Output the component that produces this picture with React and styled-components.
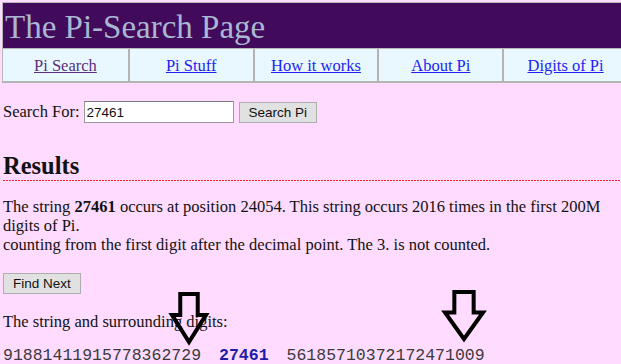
import React from "react";
import styled, { createGlobalStyle } from "styled-components";

const Global = createGlobalStyle`
  html, body { margin: 0; padding: 0; }
  body {
    background: #ffdcff;
    font-family: "Liberation Serif", "Times New Roman", serif;
    font-size: 16.5px;
    color: #111;
    overflow: hidden;
  }
`;

const Page = styled.div`
  position: relative;
  width: 621px;
  height: 364px;
  overflow: hidden;
  background: #ffdcff;
`;

const Header = styled.header`
  margin: 2px 0 0 2px;
  width: 624px;
  border-top: 1px solid #b8b8b8;
  border-left: 1px solid #b8b8b8;
`;

const TitleBar = styled.div`
  height: 45px;
  background: #420a5b;
  display: flex;
  align-items: center;
  padding-left: 2px;
`;

const Title = styled.h1`
  margin: 0;
  font-family: "Liberation Serif", "Times New Roman", serif;
  font-weight: normal;
  font-size: 33px;
  line-height: 36px;
  color: #a9b8d2;
  position: relative;
  top: 1px;
`;

const Nav = styled.nav`
  display: grid;
  grid-template-columns: repeat(5, 1fr);
  height: 35px;
  border-top: 1px solid #b8b8b8;
  border-bottom: 2px solid #b4b4b4;
  box-sizing: border-box;
  background: #e9f8fe;
`;

const NavCell = styled.div`
  display: flex;
  align-items: center;
  justify-content: center;
  border-left: ${(p) => (p.$first ? "none" : "2px solid #b4b4b4")};
  padding-top: 2px;
`;

const NavLink = styled.a`
  font-size: 16.5px;
  color: ${(p) => (p.$visited ? "#5a2f7f" : "#1e1ef0")};
  text-decoration: underline;
  cursor: pointer;
`;

const Content = styled.main`
  padding-left: 3px;
`;

const SearchForm = styled.form`
  display: flex;
  align-items: center;
  margin-top: 18px;
  height: 22px;
`;

const Label = styled.label`
  font-size: 16.5px;
  margin-right: 4px;
`;

const TextInput = styled.input`
  box-sizing: border-box;
  width: 150px;
  height: 22px;
  border: 1px solid #9a9a9a;
  border-top-color: #7a7a7a;
  background: #fff;
  padding: 1px 2px;
  font-family: "Liberation Sans", Arial, sans-serif;
  font-size: 13.5px;
  color: #111;
  outline: none;
`;

const Button = styled.button`
  box-sizing: border-box;
  height: 21px;
  padding: 0 ${(p) => p.$pad || 8}px;
  margin-left: ${(p) => p.$ml || 0}px;
  background: #e1e1e1;
  border: 1px solid #adadad;
  border-radius: 0;
  font-family: "Liberation Sans", Arial, sans-serif;
  font-size: 13.5px;
  color: #111;
  cursor: pointer;
`;

const ResultsHeading = styled.h2`
  margin: 29px -3px 0 0;
  padding-bottom: 1px;
  font-size: 24.5px;
  line-height: 28px;
  font-weight: bold;
  background-image: repeating-linear-gradient(
    to right,
    #ff1f3a 0 2px,
    transparent 2px 3px
  );
  background-size: 100% 1px;
  background-repeat: no-repeat;
  background-position: left bottom;
`;

const Para = styled.p`
  margin: 16px 0 0 0;
  line-height: 19px;
  font-size: 16.5px;
  padding-right: 4px;
`;

const FindRow = styled.div`
  margin-top: 19px;
  display: flex;
`;

const Caption = styled.p`
  margin: 18px 0 0 0;
  line-height: 20px;
`;

const Digits = styled.div`
  margin-top: 14px;
  font-family: "Liberation Mono", "Courier New", monospace;
  font-size: 16.5px;
  line-height: 20px;
  color: #3a3a3a;
  white-space: pre;
`;

const Gap = styled.span`
  display: inline-block;
  width: ${(p) => p.$w}px;
`;

const Match = styled.b`
  color: #1c1ca8;
  font-weight: bold;
`;

const ArrowSvg = styled.svg`
  position: absolute;
  left: ${(p) => p.$x}px;
  top: ${(p) => p.$y}px;
  overflow: visible;
`;

function DownArrow({ x, y, w, h }) {
  const shaftL = w * 0.27;
  const shaftR = w * 0.73;
  const headY = h * 0.44;
  return (
    <ArrowSvg $x={x} $y={y} width={w} height={h} viewBox={`0 0 ${w} ${h}`}>
      <polygon
        points={`${shaftL},2 ${shaftR},2 ${shaftR},${headY} ${w - 2},${headY} ${w / 2},${h - 2} 2,${headY} ${shaftL},${headY}`}
        fill="none"
        stroke="#000"
        strokeWidth="4"
        strokeLinejoin="miter"
      />
    </ArrowSvg>
  );
}

const links = [
  { label: "Pi Search", visited: true },
  { label: "Pi Stuff" },
  { label: "How it works" },
  { label: "About Pi" },
  { label: "Digits of Pi" },
];

export default function App() {
  return (
    <>
      <Global />
      <Page>
        <Header>
          <TitleBar>
            <Title>The Pi-Search Page</Title>
          </TitleBar>
          <Nav>
            {links.map((l, i) => (
              <NavCell key={l.label} $first={i === 0}>
                <NavLink $visited={l.visited}>{l.label}</NavLink>
              </NavCell>
            ))}
          </Nav>
        </Header>
        <Content>
          <SearchForm onSubmit={(e) => e.preventDefault()}>
            <Label>Search For:</Label>
            <TextInput defaultValue="27461" />
            <Button $ml={5} $pad={9} type="button">Search Pi</Button>
          </SearchForm>
          <ResultsHeading>Results</ResultsHeading>
          <Para>
            The string <b>27461</b> occurs at position 24054. This string occurs 2016 times in the first 200M digits of Pi.
            <br />
            counting from the first digit after the decimal point. The 3. is not counted.
          </Para>
          <FindRow>
            <Button $pad={9} type="button">Find Next</Button>
          </FindRow>
          <Caption>The string and surrounding digits:</Caption>
          <Digits>
            91881411915778362729<Gap $w={18} />
            <Match>27461</Match>
            <Gap $w={18} />56185710372172471009
          </Digits>
        </Content>
        <DownArrow x={170} y={292} w={38} h={52} />
        <DownArrow x={443} y={290} w={42} h={51} />
      </Page>
    </>
  );
}
